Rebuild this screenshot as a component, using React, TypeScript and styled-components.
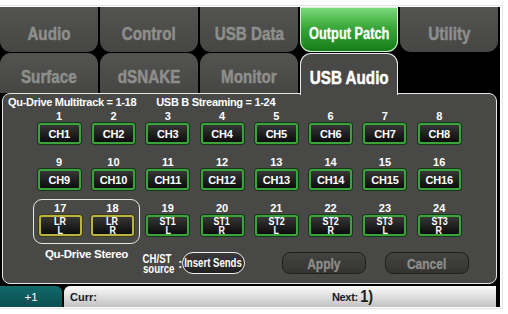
import styled, { createGlobalStyle, css } from "styled-components";

const GlobalStyle = createGlobalStyle`
  html, body {
    margin: 0;
    padding: 0;
    background: #ffffff;
  }
  body {
    font-family: "Liberation Sans", Arial, sans-serif;
  }
`;

const Frame = styled.div`
  margin-top: 5px;
  width: 501px;
  padding: 1px 1px 1px 0;
  border: 1px solid #e4e4e4;
  border-left: none;
`;

const Screen = styled.div`
  width: 500px;
  height: 300px;
  background: #000;
  display: flex;
  flex-direction: column;
  overflow: hidden;
`;

// condensed lettering: the unit's font is a narrow grotesque
const Squeeze = styled.span<{ $x?: number }>`
  display: inline-block;
  white-space: nowrap;
  transform: scaleX(${(p) => p.$x ?? 0.8});
`;

const TabRow = styled.div<{ $height: number }>`
  display: grid;
  grid-template-columns: repeat(5, 98px);
  column-gap: 2px;
  height: ${(p) => p.$height}px;
  flex-shrink: 0;
`;

type TabKind = "idle" | "green" | "open";

const Tab = styled.div<{ $kind?: TabKind; $upper?: boolean; $size?: number }>`
  display: flex;
  align-items: center;
  justify-content: center;
  font-weight: bold;
  font-size: ${(p) => p.$size ?? 19}px;
  -webkit-text-stroke: 0.5px currentColor;
  color: #8e8e8b;
  padding-top: ${(p) => (p.$upper ? 9 : 7)}px;
  box-sizing: border-box;
  background: linear-gradient(#535351, #464644);
  border-radius: ${(p) => (p.$upper ? "0 0 11px 11px" : "11px 11px 0 0")};
  ${(p) =>
    p.$kind === "green" &&
    css`
      color: #ffffff;
      -webkit-text-stroke: 0.3px currentColor;
      background: linear-gradient(#7fdc7c 0%, #3aa83a 45%, #157a17 100%);
      box-shadow: inset 0 0 0 1px #d8f0d8;
    `}
  ${(p) =>
    p.$kind === "open" &&
    css`
      color: #ffffff;
      background: #484846;
      border: 1.5px solid #e8e8e8;
      border-bottom: none;
      margin-bottom: -2px;
      position: relative;
      z-index: 1;
    `}
`;

const Gap = styled.div`
  height: 1px;
  flex-shrink: 0;
`;

const Panel = styled.div`
  height: 191px;
  margin: 0 3px 0 2px;
  box-sizing: border-box;
  background: #484846;
  border: 1.5px solid #e6e6e6;
  border-radius: 8px;
  padding: 3px 0 0 5px;
  display: flex;
  flex-direction: column;
  color: #ffffff;
  flex-shrink: 0;
`;

const Header = styled.div`
  display: flex;
  font-size: 11px;
  line-height: 11px;
  letter-spacing: -0.3px;
  font-weight: bold;
  gap: 20px;
`;

const Grid = styled.div`
  display: grid;
  grid-template-columns: repeat(8, 54.3px);
  row-gap: 3px;
  margin-left: 24px;
`;

const Cell = styled.div`
  display: flex;
  flex-direction: column;
  align-items: center;
  padding: 2px 0 7px;
`;

const Number = styled.div`
  font-size: 11px;
  line-height: 12px;
  font-weight: bold;
  margin-bottom: 1px;
`;

const Group = styled.div`
  grid-column: span 2;
  display: grid;
  grid-template-columns: repeat(2, 1fr);
  border: 1.5px solid #e6e6e6;
  border-radius: 9px;
  margin: -1px 1px 0 1px;
  box-sizing: border-box;
`;

const Chan = styled.div<{ $tone?: "green" | "gold"; $split?: boolean }>`
  width: 43px;
  height: 21px;
  box-sizing: border-box;
  border-radius: 3px;
  border: 2px solid ${(p) => (p.$tone === "gold" ? "#b9b43f" : "#3aa43a")};
  box-shadow: 0 0 0 1px ${(p) => (p.$tone === "gold" ? "#3c3a14" : "#16361a")};
  background: linear-gradient(#363636, #0c0c0c);
  display: flex;
  flex-direction: column;
  align-items: center;
  justify-content: center;
  color: #ffffff;
  font-weight: bold;
  ${(p) =>
    p.$split
      ? css`
          font-size: 10.5px;
          line-height: 9px;
        `
      : css`
          font-size: 11px;
          letter-spacing: -0.2px;
        `}
`;

const Footer = styled.div`
  display: flex;
  align-items: flex-start;
  margin-left: 24px;
`;

const Caption = styled.div`
  width: 109px;
  text-align: center;
  font-size: 11.5px;
  line-height: 12px;
  font-weight: bold;
  letter-spacing: -0.3px;
  margin-top: 4px;
`;

const SourceRow = styled.div`
  display: flex;
  align-items: center;
  margin-top: 8px;
`;

const Source = styled.div`
  width: 40px;
  display: flex;
  align-items: center;
  justify-content: space-between;
  font-weight: bold;
  font-size: 12px;
  line-height: 10px;
  padding-top: 1px;
`;

const SourceText = styled.div`
  display: flex;
  flex-direction: column;
  align-items: flex-start;
  margin-left: -2px;
`;

const Pill = styled.div`
  margin-left: 1px;
  width: 63px;
  height: 22px;
  box-sizing: border-box;
  border: 1.5px solid #eeeeee;
  border-radius: 11px;
  background: linear-gradient(#3a3a3a, #202020);
  display: flex;
  align-items: center;
  justify-content: center;
  font-weight: bold;
  font-size: 12px;
`;

const Action = styled.div<{ $left: number }>`
  margin: 8px 0 0 ${(p) => p.$left}px;
  width: 84px;
  height: 22px;
  box-sizing: border-box;
  border: 1px solid #1e1e1e;
  border-radius: 8px;
  background: linear-gradient(#434341, #343432);
  display: flex;
  align-items: center;
  justify-content: center;
  font-weight: bold;
  font-size: 15px;
  -webkit-text-stroke: 0.3px currentColor;
  color: #8e8e8b;
`;

const StatusBar = styled.div`
  margin-top: 2px;
  height: 21px;
  display: flex;
  flex-shrink: 0;
`;

const Offset = styled.div`
  width: 62px;
  background: linear-gradient(#12696a, #0a4f50);
  border-radius: 0 6px 0 0;
  color: #ffffff;
  font-size: 11.5px;
  display: flex;
  align-items: center;
  justify-content: center;
`;

const Cue = styled.div`
  margin-left: 2px;
  width: 432px;
  background: linear-gradient(#fbfbfb, #dcdcdc 55%, #c2c2c2);
  border-radius: 6px 0 0 0;
  display: flex;
  align-items: center;
  color: #1a1a1a;
  font-size: 11px;
  font-weight: bold;
  padding-left: 6px;
  box-sizing: border-box;
`;

const Next = styled.span`
  margin-left: 235px;
  letter-spacing: -0.3px;
`;

const Scene = styled.span`
  font-size: 17px;
  font-weight: bold;
  margin-left: 1px;
`;

const upper = ["Audio", "Control", "USB Data", "Output Patch", "Utility"];
const lower = ["Surface", "dSNAKE", "Monitor", "USB Audio"];

type Channel = { n: number; top: string; bottom?: string; tone?: "green" | "gold" };

const channels: Channel[] = [
  ...Array.from({ length: 16 }, (_, i) => ({ n: i + 1, top: `CH${i + 1}` })),
  { n: 17, top: "LR", bottom: "L", tone: "gold" as const },
  { n: 18, top: "LR", bottom: "R", tone: "gold" as const },
  { n: 19, top: "ST1", bottom: "L" },
  { n: 20, top: "ST1", bottom: "R" },
  { n: 21, top: "ST2", bottom: "L" },
  { n: 22, top: "ST2", bottom: "R" },
  { n: 23, top: "ST3", bottom: "L" },
  { n: 24, top: "ST3", bottom: "R" },
];

function ChannelCell({ ch }: { ch: Channel }) {
  return (
    <Cell>
      <Number>{ch.n}</Number>
      <Chan $tone={ch.tone ?? "green"} $split={!!ch.bottom}>
        {ch.bottom ? (
          <>
            <Squeeze $x={0.85}>{ch.top}</Squeeze>
            <Squeeze $x={0.85}>{ch.bottom}</Squeeze>
          </>
        ) : (
          <span>{ch.top}</span>
        )}
      </Chan>
    </Cell>
  );
}

export default function App() {
  return (
    <>
      <GlobalStyle />
      <Frame>
        <Screen>
          <TabRow $height={45}>
            {upper.map((t) => (
              <Tab
                key={t}
                $upper
                $kind={t === "Output Patch" ? "green" : "idle"}
                $size={t === "Output Patch" ? 16 : 19}
              >
                <Squeeze>{t}</Squeeze>
              </Tab>
            ))}
          </TabRow>
          <Gap />
          <TabRow $height={40}>
            {lower.map((t) => (
              <Tab key={t} $kind={t === "USB Audio" ? "open" : "idle"}>
                <Squeeze>{t}</Squeeze>
              </Tab>
            ))}
          </TabRow>
          <Panel>
            <Header>
              <span>Qu-Drive Multitrack = 1-18</span>
              <span>USB B Streaming = 1-24</span>
            </Header>
            <Grid>
              {channels.slice(0, 16).map((ch) => (
                <ChannelCell key={ch.n} ch={ch} />
              ))}
              <Group>
                {channels.slice(16, 18).map((ch) => (
                  <ChannelCell key={ch.n} ch={ch} />
                ))}
              </Group>
              {channels.slice(18).map((ch) => (
                <ChannelCell key={ch.n} ch={ch} />
              ))}
            </Grid>
            <Footer>
              <Caption>Qu-Drive Stereo</Caption>
              <SourceRow>
                <Source>
                  <SourceText>
                    <Squeeze>CH/ST</Squeeze>
                    <Squeeze>source</Squeeze>
                  </SourceText>
                  <span>:</span>
                </Source>
                <Pill>
                  <Squeeze>Insert Sends</Squeeze>
                </Pill>
              </SourceRow>
              <Action $left={37}>
                <Squeeze>Apply</Squeeze>
              </Action>
              <Action $left={19}>
                <Squeeze>Cancel</Squeeze>
              </Action>
            </Footer>
          </Panel>
          <StatusBar>
            <Offset>+1</Offset>
            <Cue>
              Curr:
              <Next>Next:</Next>
              <Scene>
                <Squeeze $x={0.85}>1)</Squeeze>
              </Scene>
            </Cue>
          </StatusBar>
        </Screen>
      </Frame>
    </>
  );
}
